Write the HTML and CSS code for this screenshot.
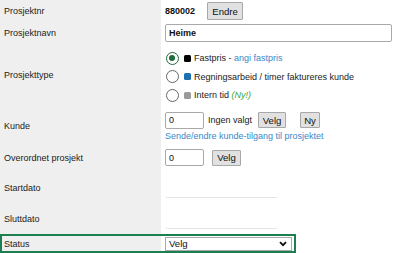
FILE: index.html
```html
<!DOCTYPE html>
<html>
<head>
<meta charset="utf-8">
<link rel="stylesheet" href="styles.css">
</head>
<body>
<div class="form">
  <div class="row r-nr">
    <div class="lbl">Prosjektnr</div>
    <div class="val"><b class="nr">880002</b><span class="btn btn-endre">Endre</span></div>
  </div>
  <div class="row r-navn">
    <div class="lbl">Prosjektnavn</div>
    <div class="val"><div class="inp inp-wide"><b>Heime</b></div></div>
  </div>
  <div class="row r-type">
    <div class="lbl">Prosjekttype</div>
    <div class="val radios">
      <div class="radio-row"><span class="radio checked"></span><span class="sq sq-black"></span><span>Fastpris - <span class="link">angi fastpris</span></span></div>
      <div class="radio-row"><span class="radio"></span><span class="sq sq-blue"></span><span>Regningsarbeid / timer faktureres kunde</span></div>
      <div class="radio-row"><span class="radio"></span><span class="sq sq-gray"></span><span>Intern tid <i class="new">(Ny!)</i></span></div>
    </div>
  </div>
  <div class="row r-kunde">
    <div class="lbl">Kunde</div>
    <div class="val stack">
      <div class="line"><div class="inp inp-num">0</div><span class="none">Ingen valgt</span><span class="btn btn-velg">Velg</span><span class="btn btn-ny">Ny</span></div>
      <div class="link">Sende/endre kunde-tilgang til prosjektet</div>
    </div>
  </div>
  <div class="row r-over">
    <div class="lbl">Overordnet prosjekt</div>
    <div class="val"><div class="inp inp-num">0</div><span class="btn btn-velg2">Velg</span></div>
  </div>
  <div class="row r-start">
    <div class="lbl">Startdato</div>
    <div class="val"><div class="date"></div></div>
  </div>
  <div class="row r-slutt">
    <div class="lbl">Sluttdato</div>
    <div class="val"><div class="date"></div></div>
  </div>
  <div class="row r-status">
    <div class="lbl">Status</div>
    <div class="val"><div class="select"><span>Velg</span><svg class="chev" width="8" height="6" viewBox="0 0 8 6"><path d="M1 1.2 L4 4.2 L7 1.2" fill="none" stroke="#111" stroke-width="1.8"/></svg></div></div>
  </div>
</div>
</body>
</html>
```

FILE: styles.css
```css
* { box-sizing: border-box; }
html, body { margin: 0; padding: 0; background: #fff; }
body {
  font-family: "Liberation Sans", Arial, sans-serif;
  font-size: 9px;
  color: #222;
  width: 400px;
  height: 253px;
  overflow: hidden;
}
.form { display: flex; flex-direction: column; }
.row {
  display: grid;
  grid-template-columns: 161px 1fr;
}
.lbl {
  background: #efefef;
  padding-left: 4px;
  display: flex;
  align-items: center;
}
.val {
  padding-left: 4px;
  display: flex;
  align-items: center;
}
.r-nr { height: 22px; }
.r-navn { height: 22px; }
.r-type { height: 62px; }
.r-kunde { height: 37px; }
.r-over { height: 29px; }
.r-start { height: 31px; }
.r-slutt { height: 31px; }
.r-status {
  height: 19px;
  width: 296px;
  border: 2px solid #1b7f4f;
  grid-template-columns: 159px 1fr;
}
.r-kunde .lbl { padding-top: 3px; }
.r-status .lbl { padding-left: 2px; }
.r-status .val { padding-left: 4px; }

.nr { font-weight: bold; color: #111; }
.btn {
  display: inline-flex;
  align-items: center;
  justify-content: center;
  background: #e1e1e1;
  border: 1px solid #a8a8a8;
  color: #111;
  font-size: 9.6px;
  border-radius: 1px;
}
.btn-endre { margin-left: 12px; width: 36px; height: 18px; }
.btn-velg { margin-left: 6px; width: 28px; height: 16px; }
.btn-ny { margin-left: 14px; width: 20px; height: 16px; }
.btn-velg2 { margin-left: 8px; width: 29px; height: 16px; }

.inp {
  border: 1px solid #a9a9a9;
  border-radius: 2px;
  background: #fff;
  display: flex;
  align-items: center;
  padding-left: 3px;
  color: #111;
}
.inp-wide { width: 227px; height: 18px; }
.inp-num { width: 39px; height: 17px; }
.none { margin-left: 4px; }

.radios { flex-direction: column; align-items: flex-start; justify-content: center; gap: 5.5px; padding-top: 3px; }
.radio-row { display: flex; align-items: center; height: 13px; }
.radio {
  width: 13px; height: 13px;
  border: 1px solid #666;
  border-radius: 50%;
  background: #fff;
  margin-left: 1px;
  margin-right: 5px;
  position: relative;
}
.radio.checked { border: 1.5px solid #1e6b3c; }
.radio.checked::after {
  content: "";
  position: absolute;
  left: 2px; top: 2px;
  width: 6px; height: 6px;
  border-radius: 50%;
  background: #1e6b3c;
}
.sq { width: 7px; height: 7px; border-radius: 1.5px; margin-right: 3px; }
.sq-black { background: #000; }
.sq-blue { background: #1c70b0; }
.sq-gray { background: #9a9a9a; }
.link { color: #3b87c9; }
.new { color: #3aa53a; }

.stack { flex-direction: column; align-items: flex-start; justify-content: center; padding-top: 3px; }
.line { display: flex; align-items: center; }
.stack .link { margin-top: 2px; }

.date {
  width: 113px;
  height: 20px;
  border-bottom: 1px solid #e4e4e4;
  border-radius: 0 0 3px 3px;
}
.select {
  width: 127px;
  height: 14px;
  border: 1px solid #a9a9a9;
  display: flex;
  align-items: center;
  justify-content: space-between;
  padding: 0 3px 0 3px;
  color: #111;
  font-size: 9.6px;
}
.chev { margin-right: 1px; }
```
